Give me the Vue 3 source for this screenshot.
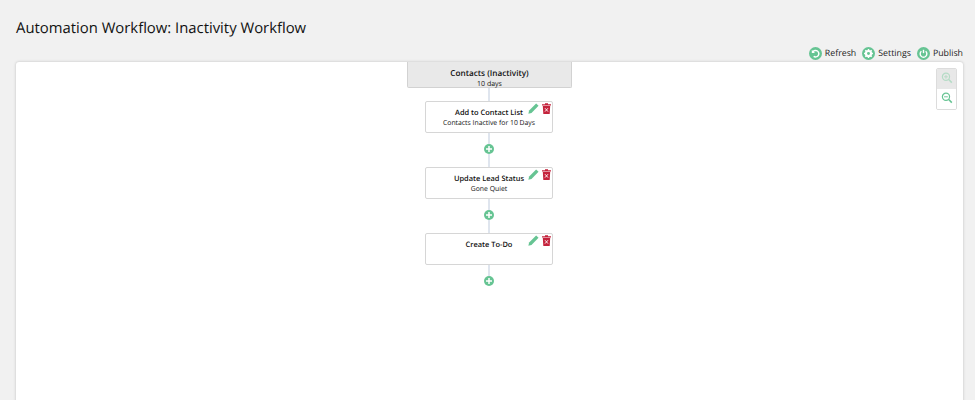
<script setup>
const actions = [
  { id: 'refresh', label: 'Refresh' },
  { id: 'settings', label: 'Settings' },
  { id: 'publish', label: 'Publish' }
]
const steps = [
  { title: 'Add to Contact List', sub: 'Contacts Inactive for 10 Days' },
  { title: 'Update Lead Status', sub: 'Gone Quiet' },
  { title: 'Create To-Do', sub: '' }
]
</script>

<template>
  <div class="page">
    <h1 class="title">Automation Workflow: Inactivity Workflow</h1>
    <div class="toolbar">
      <a v-for="a in actions" :key="a.id" class="action">
        <svg class="action-icon" viewBox="0 0 14 14">
          <circle cx="7" cy="7" r="7" fill="#66c493" />
          <g v-if="a.id === 'refresh'" fill="none" stroke="#fff" stroke-width="1.6">
            <path d="M4.2 5.2A3.5 3.5 0 1 1 5 10" />
            <path d="M3 3v3.4h3.4z" fill="#fff" stroke="none" />
          </g>
          <g v-else-if="a.id === 'settings'">
            <circle cx="7" cy="7" r="3.9" fill="#fff" />
            <path d="M7 2.2v9.6M2.2 7h9.6M3.6 3.6l6.8 6.8M10.4 3.6l-6.8 6.8" stroke="#fff" stroke-width="1.6" />
            <circle cx="7" cy="7" r="1.6" fill="#66c493" />
          </g>
          <g v-else fill="none" stroke="#fff" stroke-width="1.5">
            <path d="M4.7 4.6a3.6 3.6 0 1 0 4.6 0" />
            <path d="M7 3v3.6" />
          </g>
        </svg>
        <span>{{ a.label }}</span>
      </a>
    </div>
    <main class="canvas">
      <div class="zoom">
        <button class="zoom-btn off">
          <svg viewBox="0 0 14 14" class="zoom-icon">
            <circle cx="5.8" cy="5.6" r="4.2" fill="none" stroke="currentColor" stroke-width="1.4" />
            <path d="M9 8.8l3.6 3.6" stroke="currentColor" stroke-width="1.8" />
            <path d="M3.6 5.6h4.4M5.8 3.4v4.4" stroke="currentColor" stroke-width="1.1" />
          </svg>
        </button>
        <button class="zoom-btn">
          <svg viewBox="0 0 14 14" class="zoom-icon">
            <circle cx="5.8" cy="5.6" r="4.2" fill="none" stroke="currentColor" stroke-width="1.4" />
            <path d="M9 8.8l3.6 3.6" stroke="currentColor" stroke-width="1.8" />
            <path d="M3.6 5.6h4.4" stroke="currentColor" stroke-width="1.1" />
          </svg>
        </button>
      </div>

      <div class="start">
        <strong>Contacts (Inactivity)</strong>
        <span>10 days</span>
      </div>
      <template v-for="s in steps" :key="s.title">
        <div class="line short"></div>
        <div class="card">
          <strong>{{ s.title }}</strong>
          <span>{{ s.sub }}</span>
          <div class="card-tools">
            <svg class="pencil" viewBox="0 0 12 12">
              <path d="M0.4 11.6l0.8-3.4L8.9 0.5l2.6 2.6-7.7 7.7z" fill="#66c493" />
            </svg>
            <svg class="trash" viewBox="0 0 9 11">
              <path d="M0 1.2h3V0.2h3v1h3v1.2H0z" fill="#c4233c" />
              <path d="M0.8 3h7.4l-0.5 8H1.3z" fill="#c4233c" />
              <path d="M3 5.2l3 3.4M6 5.2l-3 3.4" stroke="#fff" stroke-width="0.9" />
            </svg>
          </div>
        </div>
        <div class="line mid"></div>
        <button class="add">
          <svg viewBox="0 0 10 10" class="add-icon">
            <circle cx="5" cy="5" r="5" fill="#66c493" />
            <path d="M5 2v6M2 5h6" stroke="#fff" stroke-width="1.5" />
          </svg>
        </button>
      </template>
    </main>
  </div>
</template>

<style>
html, body { margin: 0; background: #f1f1f1; overflow: hidden; }
</style>

<style scoped>
.page {
  height: 400px;
  padding: 0 12px 0 16px;
  box-sizing: border-box;
  background: #f1f1f1;
  font-family: "Open Sans", sans-serif;
  color: #111;
  overflow: hidden;
  text-rendering: geometricPrecision;
}
.title {
  margin: 0;
  padding-top: 17px;
  font-size: 14.85px;
  line-height: 22px;
  font-weight: 400;
  color: #111;
}
.toolbar {
  display: flex;
  justify-content: flex-end;
  gap: 6px;
  margin-top: 5px;
  height: 18px;
}
.action {
  display: flex;
  align-items: center;
  gap: 3px;
  font-size: 8.8px;
  color: #222;
}
.action-icon { width: 13px; height: 13px; }
.canvas {
  position: relative;
  display: flex;
  flex-direction: column;
  align-items: center;
  height: 360px;
  background: #fff;
  border-radius: 3px;
  box-shadow: 0 0 3px rgba(0, 0, 0, 0.22);
}
.zoom {
  position: absolute;
  top: 6px;
  right: 6px;
  width: 21px;
  box-sizing: border-box;
  border: 1px solid #dcdcdc;
  border-radius: 2px;
  overflow: hidden;
  background: #fff;
}
.zoom-btn {
  display: flex;
  align-items: center;
  justify-content: center;
  width: 100%;
  height: 20px;
  padding: 0 0 2px;
  border: 0;
  background: #fff;
  color: #66c493;
}
.zoom-btn.off { background: #e8e8e8; color: #b5dcc6; }
.zoom-icon { width: 12px; height: 12px; }
.start {
  display: flex;
  flex-direction: column;
  align-items: center;
  box-sizing: border-box;
  width: 165px;
  height: 26px;
  padding-top: 6px;
  background: #e9e9e9;
  border: 1px solid #d2d2d2;
  border-top: 0;
  border-radius: 0 0 2px 2px;
  font-size: 7px;
  line-height: 10px;
}
.start strong { font-size: 8.2px; line-height: 12px; font-weight: 600; }
.line { width: 2px; margin-right: 1px; background: #dfe5ee; }
.short { height: 13px; }
.mid { height: 11px; }
.card {
  position: relative;
  display: flex;
  flex-direction: column;
  align-items: center;
  box-sizing: border-box;
  width: 128px;
  height: 32px;
  margin-right: 1px;
  padding-top: 6px;
  background: #fff;
  border: 1px solid #d6d6d6;
  border-radius: 2px;
  font-size: 6.85px;
  line-height: 10px;
  white-space: nowrap;
}
.card strong { font-size: 7.45px; line-height: 11px; font-weight: 600; }
.card-tools {
  position: absolute;
  top: 1px;
  right: 1px;
  display: flex;
  align-items: flex-start;
  gap: 3px;
}
.pencil { width: 11px; height: 11px; }
.trash { width: 9px; height: 11px; }
.add {
  display: block;
  width: 10px;
  height: 10px;
  margin-right: 1px;
  padding: 0;
  border: 0;
  background: none;
  line-height: 0;
}
.add-icon { width: 10px; height: 10px; }
</style>
